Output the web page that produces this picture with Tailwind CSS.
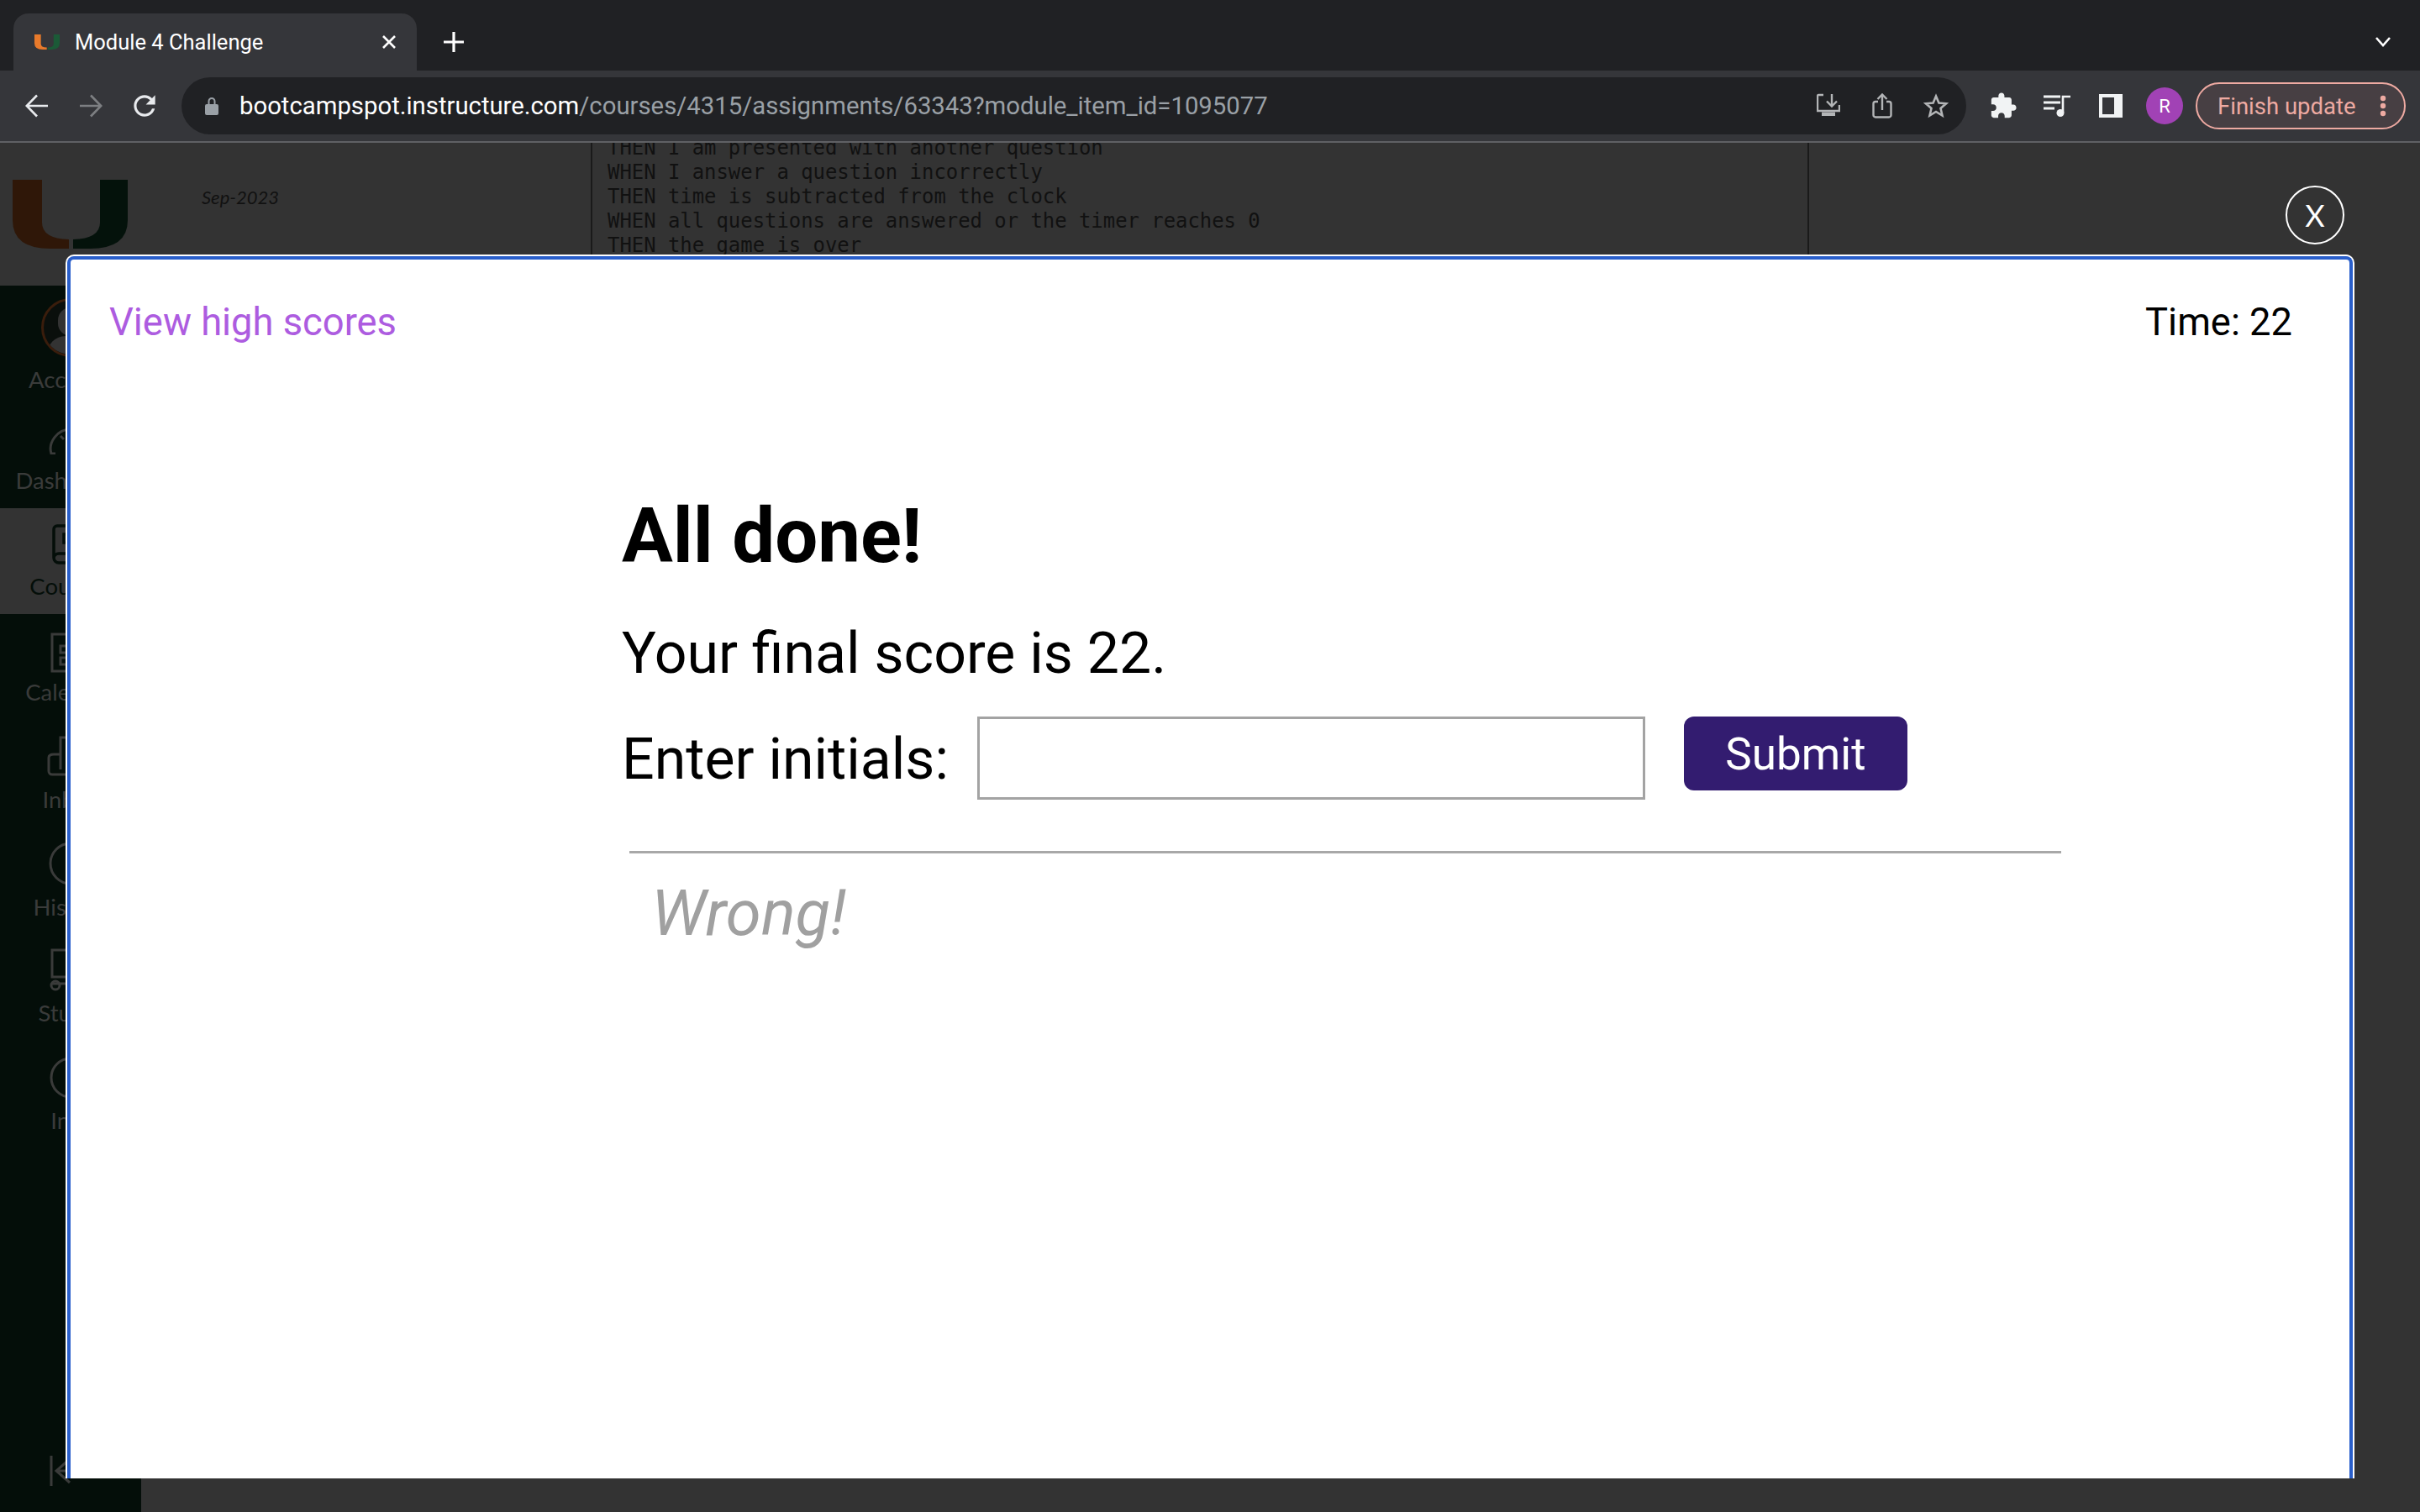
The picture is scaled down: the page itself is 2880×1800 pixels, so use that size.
<!DOCTYPE html>
<html lang="en">
<head>
  <meta charset="UTF-8" />
  <title>Module 4 Challenge</title>
  <script src="https://cdn.jsdelivr.net/npm/@tailwindcss/browser@4"></script>
</head>
<body class="w-[2880px] h-[1800px] overflow-hidden bg-[#333333] font-['Roboto',sans-serif]">

  <!-- Tab strip -->
  <div class="h-[84px] bg-[#202124] flex items-end pl-[16px]">
    <div class="w-[480px] h-[68px] bg-[#35363a] rounded-t-[18px] flex items-center pl-[25px] pr-[24px] text-white">
      <svg class="w-[30px] h-[20px]" viewBox="0 0 137 82">
        <path d="M0 0H35V51Q35 70 67 71V82H45Q0 82 0 48Z" fill="#e87a2b"/>
        <path d="M137 0H104V51Q104 70 72 71V82H92Q137 82 137 48Z" fill="#1b5a37"/>
      </svg>
      <span class="ml-[18px] text-[25.500px] leading-[32px]">Module 4 Challenge</span>
      <svg class="ml-auto w-[18px] h-[18px]" viewBox="0 0 18 18" stroke="#fff" stroke-width="2.6"><path d="M2 2L16 16M16 2L2 16"/></svg>
    </div>
    <div class="w-[88px] h-[68px] flex items-center justify-center">
      <svg class="w-[26px] h-[26px]" viewBox="0 0 26 26" stroke="#fff" stroke-width="3.2"><path d="M13 1V25M1 13H25"/></svg>
    </div>
    <div class="ml-auto w-[88px] h-[68px] flex items-center justify-center">
      <svg class="w-[18px] h-[12px]" viewBox="0 0 18 12" fill="none" stroke="#fff" stroke-width="2.6"><path d="M1 1L9 10L17 1"/></svg>
    </div>
  </div>

  <!-- Toolbar -->
  <div class="h-[86px] bg-[#35363a] border-b-2 border-[#5f6064] flex items-center pl-[12px]">
    <div class="w-[64px] flex justify-center">
      <svg class="w-[28px] h-[28px]" viewBox="0 0 28 28" fill="none" stroke="#e8eaed" stroke-width="2.6"><path d="M27 14H2M14 1.500L1.800 14L14 26.500"/></svg>
    </div>
    <div class="w-[64px] flex justify-center">
      <svg class="w-[28px] h-[28px]" viewBox="0 0 28 28" fill="none" stroke="#7d7f82" stroke-width="2.6"><path d="M1 14H26M14 1.500L26.200 14L14 26.500"/></svg>
    </div>
    <div class="w-[64px] flex justify-center">
      <svg class="w-[38px] h-[38px]" viewBox="0 0 24 24" fill="#e8eaed"><path d="M17.650 6.350C16.200 4.900 14.210 4 12 4c-4.420 0-7.990 3.580-7.990 8s3.570 8 7.990 8c3.730 0 6.840-2.550 7.730-6h-2.080c-.82 2.330-3.040 4-5.650 4-3.310 0-6-2.690-6-6s2.690-6 6-6c1.660 0 3.140.69 4.220 1.780L13 11h7V4l-2.350 2.350z"/></svg>
    </div>

    <!-- Address bar -->
    <div class="ml-[12px] w-[2124px] h-[68px] bg-[#202124] rounded-full flex items-center pl-[28px] pr-[5px]">
      <svg class="w-[16px] h-[22px]" viewBox="0 0 16 22" fill="#9aa0a6"><path d="M2 9H3.500V5.500a4.500 4.500 0 0 1 9 0V9H14a2 2 0 0 1 2 2v9a2 2 0 0 1-2 2H2a2 2 0 0 1-2-2v-9a2 2 0 0 1 2-2zM5.500 9h5V5.500a2.500 2.500 0 0 0-5 0z"/></svg>
      <span class="ml-[25px] text-[29.300px] leading-[38px] text-white">bootcampspot.instructure.com<span class="text-[#9aa0a6]">/courses/4315/assignments/63343?module_item_id=1095077</span></span>
      <div class="ml-auto flex">
        <div class="w-[64px] flex justify-center">
          <svg class="w-[28px] h-[28px]" viewBox="0 0 28 28" fill="none" stroke="#b3b5b7" stroke-width="2.400"><path d="M8 2H2.500A1.500 1.500 0 0 0 1 3.500V21H27V14"/><path d="M18 1V15M12 9.500L18 15.500L24 9.500"/><path d="M6 22.500H22V27H6Z" fill="#b3b5b7" stroke="none"/></svg>
        </div>
        <div class="w-[64px] flex justify-center">
          <svg class="w-[24px] h-[30px]" viewBox="0 0 24 30" fill="none" stroke="#b3b5b7" stroke-width="2.400"><path d="M7 10H4A2.500 2.500 0 0 0 1.500 12.500V26A2.500 2.500 0 0 0 4 28.500H20A2.500 2.500 0 0 0 22.500 26V12.500A2.500 2.500 0 0 0 20 10H17"/><path d="M12 20V2M6.500 7L12 1.500L17.500 7"/></svg>
        </div>
        <div class="w-[63px] flex justify-center">
          <svg class="w-[30px] h-[30px]" viewBox="0 0 30 30" fill="none" stroke="#b3b5b7" stroke-width="2.600"><path d="M15 3.500L18.400 11.600L27 12.300L20.500 18L22.500 26.500L15 22L7.500 26.500L9.500 18L3 12.300L11.600 11.600Z"/></svg>
        </div>
      </div>
    </div>

    <!-- Extensions and profile -->
    <div class="ml-[12px] w-[64px] flex justify-center">
      <svg class="w-[34px] h-[34px]" viewBox="0 0 24 24" fill="#f1f3f4"><path d="M20.500 11H19V7c0-1.100-.9-2-2-2h-4V3.500C13 2.120 11.880 1 10.500 1S8 2.120 8 3.500V5H4c-1.100 0-1.990.9-1.990 2v3.800H3.500c1.490 0 2.700 1.210 2.700 2.700s-1.210 2.700-2.700 2.700H2V20c0 1.100.9 2 2 2h3.800v-1.500c0-1.490 1.210-2.700 2.700-2.700 1.490 0 2.700 1.210 2.700 2.700V22H17c1.100 0 2-.9 2-2v-4h1.500c1.380 0 2.500-1.120 2.500-2.500S21.880 11 20.500 11z"/></svg>
    </div>
    <div class="w-[63px] flex justify-center">
      <svg class="w-[32px] h-[26px]" viewBox="0 0 32 26" fill="none" stroke="#f1f3f4" stroke-width="2.800"><path d="M0 2H20M0 9H20M0 16H13"/><path d="M23 21V2H32" stroke-width="2.600"/><ellipse cx="20" cy="21.500" rx="4.500" ry="4.500" fill="#f1f3f4" stroke="none"/></svg>
    </div>
    <div class="w-[65px] flex justify-center">
      <div class="w-[28px] h-[28px] border-[4px] border-r-[10px] border-[#f1f3f4] bg-[#35363a]"></div>
    </div>
    <div class="w-[64px] flex justify-center">
      <div class="w-[44px] h-[44px] rounded-full bg-[#a142b5] text-white text-[22px] flex items-center justify-center">R</div>
    </div>
    <div class="ml-[5px] w-[250px] h-[56px] rounded-full border-2 border-[#eeaaa2] bg-[#473f43] flex items-center pl-[24px] text-[#eeaaa2] text-[27.500px]">
      <span class="pt-[2px]">Finish update</span>
      <svg class="ml-[28px] w-[8px] h-[26px]" viewBox="0 0 8 26" fill="#eeaaa2"><circle cx="4" cy="4" r="3.200"/><circle cx="4" cy="13" r="3.200"/><circle cx="4" cy="22" r="3.200"/></svg>
    </div>
  </div>

  <!-- Page behind the modal -->
  <div class="relative h-[1630px] flex overflow-hidden font-['Lato',sans-serif]">
    <aside class="w-[168px] flex flex-col">
      <div class="h-[170px] pt-[44px] pl-[15px]">
        <svg class="w-[137px] h-[82px]" viewBox="0 0 137 82">
          <path d="M0 0H35V51Q35 70 67 71V82H45Q0 82 0 48Z" fill="#2f1708"/>
          <path d="M137 0H104V51Q104 70 72 71V82H92Q137 82 137 48Z" fill="#04120b"/>
        </svg>
      </div>
      <nav class="flex-1 bg-[#040e09] text-[#3a3b3a] text-[27.500px] leading-[30px] text-center relative">
        <div class="h-[139px] pt-[15px] flex flex-col items-center">
          <div class="relative w-[70px] h-[70px] rounded-full border-[3px] border-[#3a1d0c] bg-[#0a0f0c] flex items-end justify-center overflow-hidden">
            <div class="absolute top-[8px] w-[30px] h-[34px] rounded-full bg-[#333333]"></div>
            <div class="w-[56px] h-[22px] rounded-t-full bg-[#333333]"></div>
          </div>
          <span class="mt-[12px]">Account</span>
        </div>
        <div class="h-[126px] pt-[30px] flex flex-col items-center">
          <svg class="w-[56px] h-[32px]" viewBox="0 0 56 32" fill="none" stroke="#3a3b3a" stroke-width="3"><path d="M10 31H5C1 18 12 2 28 2S55 18 51 31H46M16 10L20 14"/></svg>
          <span class="mt-[16px]">Dashboard</span>
        </div>
        <div class="h-[126px] pt-[19px] flex flex-col items-center bg-[#333333] text-[#040e09]">
          <svg class="w-[44px] h-[48px]" viewBox="0 0 44 48" fill="none" stroke="#040e09" stroke-width="3.500"><path d="M2 40V6A4 4 0 0 1 6 2H42V46H8A6 6 0 0 1 2 40A6 6 0 0 1 8 35H42M14 12H32V22H14Z"/></svg>
          <span class="mt-[11px]">Courses</span>
        </div>
        <div class="h-[128px] pt-[16px] flex flex-col items-center">
          <svg class="w-[48px] h-[54px]" viewBox="0 0 48 54" fill="none" stroke="#3a3b3a" stroke-width="3"><path d="M2 8H46V52H2ZM24 1V12M12 22H21V30H12ZM27 22H36V30H27ZM12 36H21V44H12ZM27 36H36V44H27Z"/></svg>
          <span class="mt-[8px]">Calendar</span>
        </div>
        <div class="h-[128px] pt-[17px] flex flex-col items-center">
          <svg class="w-[56px] h-[50px]" viewBox="0 0 56 50" fill="none" stroke="#3a3b3a" stroke-width="3"><path d="M16 26V2H54V46H6A4 4 0 0 1 2 42V26Q2 22 8 22H16V40M26 12H46M26 22H46M26 32H46"/></svg>
          <span class="mt-[11px]">Inbox</span>
        </div>
        <div class="h-[126px] pt-[15px] flex flex-col items-center">
          <svg class="w-[52px] h-[52px]" viewBox="0 0 52 52" fill="none" stroke="#3a3b3a" stroke-width="3"><circle cx="26" cy="26" r="24"/><path d="M26 12V27L36 33"/></svg>
          <span class="mt-[11px]">History</span>
        </div>
        <div class="h-[128px] pt-[16px] flex flex-col items-center">
          <svg class="w-[52px] h-[52px]" viewBox="0 0 52 52" fill="none" stroke="#3a3b3a" stroke-width="3"><path d="M4 34V2H50V34H4ZM28 34V42M4 42H24"/><circle cx="8" cy="44" r="5"/><circle cx="26" cy="47" r="4"/></svg>
          <span class="mt-[10px]">Studio</span>
        </div>
        <div class="pt-[17px] flex flex-col items-center">
          <svg class="w-[50px] h-[50px]" viewBox="0 0 50 50" fill="none" stroke="#3a3b3a" stroke-width="3"><circle cx="25" cy="25" r="23"/></svg>
          <span class="mt-[11px]">Info</span>
        </div>
        <svg class="absolute left-[58px] bottom-[30px] w-[28px] h-[38px]" viewBox="0 0 28 38" fill="none" stroke="#3a3b3a" stroke-width="3"><path d="M3 1V37M25 5L9 19L25 33M9 19H28"/></svg>
      </nav>
    </aside>

    <section class="flex-1 relative">
      <!-- Assignment details, mostly covered by the modal -->
      <div class="flex">
        <p class="ml-[72px] mt-[53px] italic text-[22px] leading-[24px] text-[#111]">Sep-2023</p>
        <pre class="ml-[371px] w-[1450px] h-[160px] overflow-hidden border-x-2 border-[#1a1a1a] pl-[18px] -mt-[8px] text-[23.900px] leading-[29px] text-[#111] font-['DejaVu_Sans_Mono',monospace]">THEN I am presented with another question
WHEN I answer a question incorrectly
THEN time is subtracted from the clock
WHEN all questions are answered or the timer reaches 0
THEN the game is over</pre>
      </div>
    </section>

    <!-- Close button -->
    <div class="absolute left-[2720px] top-[51px] w-[70px] h-[70px] rounded-full border-2 border-white text-white text-[36px] flex items-center justify-center">X</div>

    <!-- Modal with the quiz -->
    <div class="absolute left-[78px] top-[133px] w-[2724px] h-[1457px] bg-white border-2 border-b-0 border-white rounded-t-[10px] font-['Roboto',sans-serif]">
      <div class="h-full border-4 border-b-0 border-[#2a5fcb] rounded-t-[8px] text-black">
        <div class="pt-[47px] pl-[46px] pr-[68px] flex justify-between text-[45.300px] leading-[56px]">
          <a class="text-[#ad5ce0]">View high scores</a>
          <span>Time: 22</span>
        </div>
        <div class="ml-[656px] mt-[180px]">
          <h1 class="text-[90.500px] leading-[92px] font-bold">All done!</h1>
          <p class="mt-[56px] text-[68px] leading-[76px]">Your final score is 22.</p>
          <div class="mt-[37px] flex items-start">
            <label class="h-[99px] pt-[3px] flex items-center text-[68px]">Enter initials:</label>
            <input class="ml-[34px] w-[795px] h-[99px] border-[3px] border-[#a3a3a3] bg-white" />
            <button class="ml-[46px] w-[266px] h-[88px] pt-[4px] rounded-[12px] bg-[#331c70] text-white text-[53px]">Submit</button>
          </div>
          <hr class="mt-[61px] ml-[9px] w-[1704px] border-t-[3px] border-[#a8a8a8]" />
          <p class="mt-[29px] ml-[35px] italic text-[76px] leading-[84px] text-[#a0a0a0]">Wrong!</p>
        </div>
      </div>
    </div>
  </div>

</body>
</html>
